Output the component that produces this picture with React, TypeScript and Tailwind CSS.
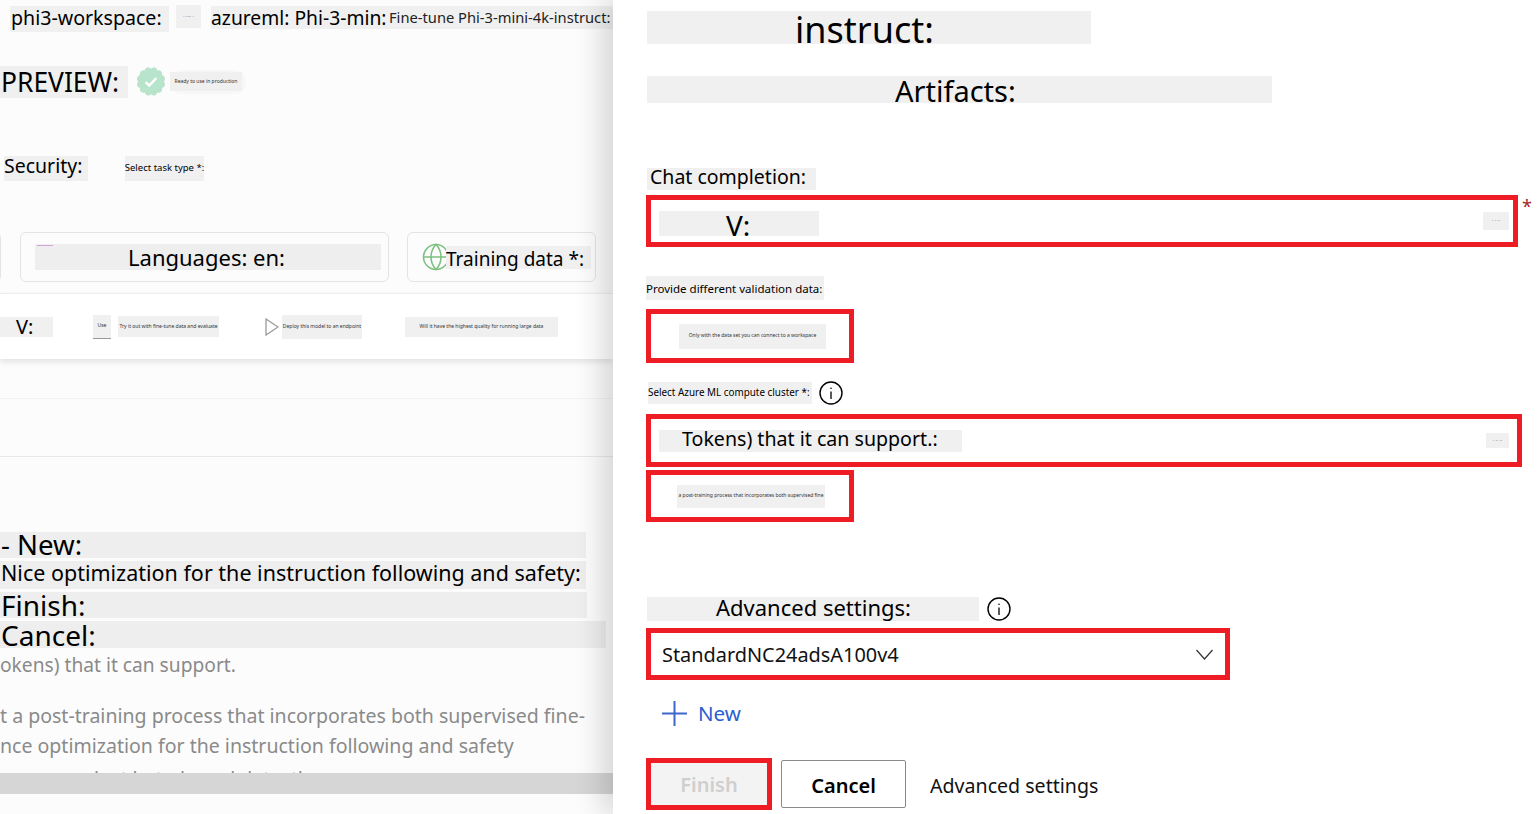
import React from 'react';
import { Globe } from 'lucide-react';

// scalloped seal outline for the green verified badge
const sealPath = () => {
  const n = 12;
  let d = '';
  for (let i = 0; i < n; i++) {
    const a = (i / n) * Math.PI * 2;
    const x = (12 + 9.6 * Math.cos(a)).toFixed(2);
    const y = (12 + 9.6 * Math.sin(a)).toFixed(2);
    d += i === 0 ? `M${x} ${y}` : `A2.8 2.8 0 0 1 ${x} ${y}`;
  }
  return `${d}A2.8 2.8 0 0 1 21.6 12Z`;
};

const InfoIcon = () => (
  <svg viewBox="0 0 24 24" className="h-[24px] w-[24px] shrink-0" fill="none" stroke="#000">
    <circle cx="12" cy="12" r="11" strokeWidth="1.4" />
    <path d="M12 10.5V18" strokeWidth="1.3" />
    <circle cx="12" cy="7.2" r="0.8" fill="#000" stroke="none" />
  </svg>
);

const Tiny: React.FC<{ className?: string; children: React.ReactNode }> = ({ className, children }) => (
  <div className={`flex items-center justify-center overflow-hidden whitespace-nowrap bg-[#f0f0f0] text-[5px] text-[#333] ${className ?? ''}`}>
    {children}
  </div>
);

const LeftPanel = () => (
  <div className="flex h-[814px] w-[613px] shrink-0 flex-col overflow-hidden bg-[#fcfcfc] text-black">
    <div className="flex h-[32px] shrink-0 items-start pt-[5px]">
      <div className="ml-[10px] mt-[1px] flex h-[26px] w-[159px] shrink-0 items-center whitespace-nowrap bg-[#f0f0f0] pb-[2px] pl-px text-[19.6px]">phi3-workspace:</div>
      <Tiny className="ml-[7px] h-[23px] w-[25px] shrink-0">· ···· ·</Tiny>
      <div className="ml-[10px] mt-[1px] flex h-[23px] w-[178px] shrink-0 items-center whitespace-nowrap bg-[#f0f0f0] pt-[1px] text-[19.3px]">azureml: Phi-3-min:</div>
      <div className="mt-[1px] flex h-[23px] w-[224px] shrink-0 items-center whitespace-nowrap bg-[#f0f0f0] text-[14.7px] text-[#222]">Fine-tune Phi-3-mini-4k-instruct:</div>
    </div>

    <div className="mt-[33px] flex h-[33px] shrink-0 items-center">
      <div className="flex h-[32px] w-[128px] shrink-0 items-center bg-[#f0f0f0] pl-px pt-[2px] text-[26.4px] leading-none">PREVIEW:</div>
      <svg viewBox="0 0 24 24" className="ml-[7px] h-[33px] w-[32px] shrink-0">
        <path d={sealPath()} fill="#b7e4cb" />
        <path d="M8 12.4l2.7 2.7 5.3-5.6" fill="none" stroke="#ffffff" strokeWidth="1.8" />
      </svg>
      <div className="ml-[3px] flex h-[24px] w-[76px] shrink-0 items-center rounded-full bg-[#f7f7f7]">
        <Tiny className="h-[19px] w-[72px] bg-[#e8e8e8]">Ready to use in production</Tiny>
      </div>
    </div>

    <div className="mt-[57px] flex h-[26px] shrink-0 items-center">
      <div className="ml-[4px] flex h-[25px] w-[84px] items-center bg-[#f0f0f0] pb-[4px] text-[19.5px] leading-none">Security:</div>
      <div className="ml-[37px] flex h-[25px] w-[79px] items-center justify-center whitespace-nowrap bg-[#f0f0f0] text-[9.5px]">Select task type *:</div>
    </div>

    <div className="mt-[51px] flex h-[50px] shrink-0 items-stretch">
      <div className="ml-[-10px] w-[11px] rounded-md border border-[#e4e4e4]" />
      <div className="relative ml-[19px] flex w-[369px] items-center rounded-md border border-[#e4e4e4] pl-[14px]">
        <div className="absolute left-[16px] top-[12px] h-px w-[16px] bg-[#d9a0d9]" />
        <div className="flex h-[26px] w-[346px] items-center justify-center bg-[#eeeeee] pr-[3px] text-[22px] leading-none">Languages: en:</div>
      </div>
      <div className="ml-[18px] flex w-[189px] items-center rounded-md border border-[#e4e4e4] pl-[13px]">
        <Globe className="h-[30px] w-[30px] shrink-0 text-[#7cc07f]" strokeWidth={1.2} />
        <div className="ml-[-5px] flex h-[23px] w-[145px] items-center whitespace-nowrap bg-[#f0f0f0] pt-[5px] text-[19px] leading-none">Training data *:</div>
      </div>
    </div>

    <div className="mt-[11px] flex h-[66px] shrink-0 items-center border-t border-[#eeeeee] bg-white shadow-[0_3px_6px_rgba(0,0,0,0.1)]">
      <div className="flex h-[20px] w-[53px] shrink-0 items-center bg-[#f0f0f0] pl-[16px] text-[20px] leading-none">V:</div>
      <div className="ml-[40px] flex h-[24px] w-[18px] shrink-0 flex-col border-b border-[#999] bg-[#f0f0f0]">
        <Tiny className="h-full w-full">Use</Tiny>
      </div>
      <Tiny className="ml-[7px] h-[21px] w-[101px] shrink-0">Try it out with fine-tune data and evaluate</Tiny>
      <svg viewBox="0 0 14 18" className="ml-[46px] h-[18px] w-[14px] shrink-0">
        <path d="M1 1l12 8-12 8Z" fill="none" stroke="#9a9a9a" strokeWidth="1.3" />
      </svg>
      <Tiny className="ml-[3px] h-[24px] w-[80px] shrink-0">Deploy this model to an endpoint</Tiny>
      <Tiny className="ml-[43px] h-[20px] w-[153px] shrink-0">Will it have the highest quality for running large data</Tiny>
    </div>

    <div className="mt-[39px] h-px shrink-0 bg-[#f3f3f3]" />
    <div className="mt-[57px] h-px shrink-0 bg-[#e8e8e8]" />

    <div className="mt-[75px] flex h-[26px] w-[586px] shrink-0 items-center bg-[#eeeeee] pl-[1px] text-[27.6px] leading-none">- New:</div>
    <div className="mt-[3px] flex h-[28px] w-[586px] shrink-0 items-center whitespace-nowrap bg-[#eeeeee] pb-[4px] pl-[1px] text-[21.5px] leading-none">Nice optimization for the instruction following and safety:</div>
    <div className="mt-[3px] flex h-[26px] w-[587px] shrink-0 items-center bg-[#eeeeee] pl-[1px] text-[28px] leading-none">Finish:</div>
    <div className="mt-[3px] flex h-[27px] w-[606px] shrink-0 items-center bg-[#eeeeee] pl-[1px] text-[28px] leading-none">Cancel:</div>

    <div className="mt-[5px] h-[25px] shrink-0 whitespace-nowrap text-[19.2px] leading-[23px] text-[#8a8a8a]">okens) that it can support.</div>
    <div className="mt-[23px] h-[72px] shrink-0 overflow-hidden whitespace-nowrap text-[19.55px] leading-[30px] text-[#8a8a8a]">
      <div>t a post-training process that incorporates both supervised fine-</div>
      <div>nce optimization for the instruction following and safety</div>
      <div className="mt-[3px] pl-[60px]">against hate-based detection</div>
    </div>
    <div className="h-[21px] shrink-0 bg-[#d6d6d6]" />
  </div>
);

const RedBox: React.FC<{ className: string; children: React.ReactNode }> = ({ className, children }) => (
  <div className={`relative flex shrink-0 items-center border-[5px] border-[#ee1c25] bg-white ${className}`}>{children}</div>
);

const RightPanel = () => (
  <div className="relative z-10 flex h-[814px] flex-1 flex-col bg-white pl-[33px] text-black shadow-[-10px_0_28px_rgba(0,0,0,0.16)]">
    <div className="ml-px mt-[11px] flex h-[33px] w-[444px] shrink-0 items-center bg-[#f0f0f0] pl-[148px] pt-[4px] text-[36px] leading-none">instruct:</div>
    <div className="ml-px mt-[32px] flex h-[27px] w-[625px] shrink-0 items-center bg-[#f0f0f0] pl-[248px] pt-[2px] text-[29px] leading-none">Artifacts:</div>
    <div className="ml-px mt-[65px] flex h-[22px] w-[169px] shrink-0 items-center whitespace-nowrap bg-[#f0f0f0] pb-[4px] pl-[3px] text-[19.5px] leading-none">Chat completion:</div>

    <RedBox className="mt-[5px] h-[52px] w-[872px] justify-between pl-[8px] pr-[4px] pt-[5px]">
      <div className="flex h-[25px] w-[160px] items-center bg-[#f0f0f0] pl-[67px] pt-[3px] text-[28px] leading-none">V:</div>
      <Tiny className="mb-[6px] h-[18px] w-[26px]">· · ··</Tiny>
      <span className="absolute right-[-19px] top-[-7px] text-[18px] text-[#a4262c]">*</span>
    </RedBox>

    <div className="mt-[29px] flex h-[24px] w-[178px] shrink-0 items-center whitespace-nowrap bg-[#f0f0f0] pt-[2px] text-[11.5px]">Provide different validation data:</div>
    <RedBox className="mt-[9px] h-[54px] w-[208px] pl-[28px]">
      <Tiny className="h-[25px] w-[147px]">Only with the data set you can connect to a workspace</Tiny>
    </RedBox>

    <div className="mt-[18px] flex h-[23px] shrink-0 items-center">
      <div className="ml-[2px] flex h-[22px] w-[164px] items-center whitespace-nowrap bg-[#f0f0f0] text-[9.9px]">Select Azure ML compute cluster *:</div>
      <div className="ml-[7px]"><InfoIcon /></div>
    </div>

    <RedBox className="mt-[10px] h-[53px] w-[876px] justify-between pl-[8px] pr-[8px]">
      <div className="flex h-[22px] w-[303px] items-center whitespace-nowrap bg-[#f0f0f0] pb-[4px] pl-[23px] text-[19.6px] leading-none">Tokens) that it can support.:</div>
      <Tiny className="h-[15px] w-[23px]">· ·· ··</Tiny>
    </RedBox>
    <RedBox className="mt-[3px] h-[52px] w-[208px] pl-[26px]">
      <Tiny className="h-[23px] w-[148px]">a post-training process that incorporates both supervised fine</Tiny>
    </RedBox>

    <div className="mt-[74px] flex h-[25px] shrink-0 items-center">
      <div className="ml-px flex h-[24px] w-[332px] items-center whitespace-nowrap bg-[#f0f0f0] pb-[3px] pl-[69px] text-[22px] leading-none">Advanced settings:</div>
      <div className="ml-[8px]"><InfoIcon /></div>
    </div>

    <RedBox className="mt-[7px] h-[52px] w-[584px] justify-between pl-[11px] pr-[12px]">
      <span className="pt-[2px] text-[19.9px] text-[#111]">StandardNC24adsA100v4</span>
      <svg viewBox="0 0 17 11" className="h-[11px] w-[17px] shrink-0" fill="none" stroke="#333" strokeWidth="1.2">
        <path d="M0.5 1L8.5 10L16.5 1" />
      </svg>
    </RedBox>

    <div className="mt-[21px] flex h-[24px] shrink-0 items-center pl-[16px] text-[#2b5fd0]">
      <svg viewBox="0 0 25 25" className="h-[25px] w-[25px] shrink-0" stroke="#3f66cc" strokeWidth="2">
        <path d="M0 12.5H25M12.5 0V25" />
      </svg>
      <span className="ml-[11px] text-[20.5px]">New</span>
    </div>

    <div className="mt-[33px] flex h-[52px] shrink-0 items-center">
      <RedBox className="h-[52px] w-[126px] justify-center !bg-[#f3f3f3]">
        <span className="pt-[2px] text-[20px] font-semibold text-[#cfcfcf]">Finish</span>
      </RedBox>
      <button className="ml-[9px] flex h-[48px] w-[125px] items-center justify-center rounded-[2px] border border-[#8a8a8a] pt-[3px] text-[20px] font-semibold">Cancel</button>
      <span className="ml-[24px] pt-[3px] text-[19.6px] text-[#111]">Advanced settings</span>
    </div>
  </div>
);

export default function App() {
  return (
    <div className="flex h-[814px] w-[1537px] overflow-hidden bg-white font-['Noto_Sans',sans-serif]">
      <LeftPanel />
      <RightPanel />
    </div>
  );
}
